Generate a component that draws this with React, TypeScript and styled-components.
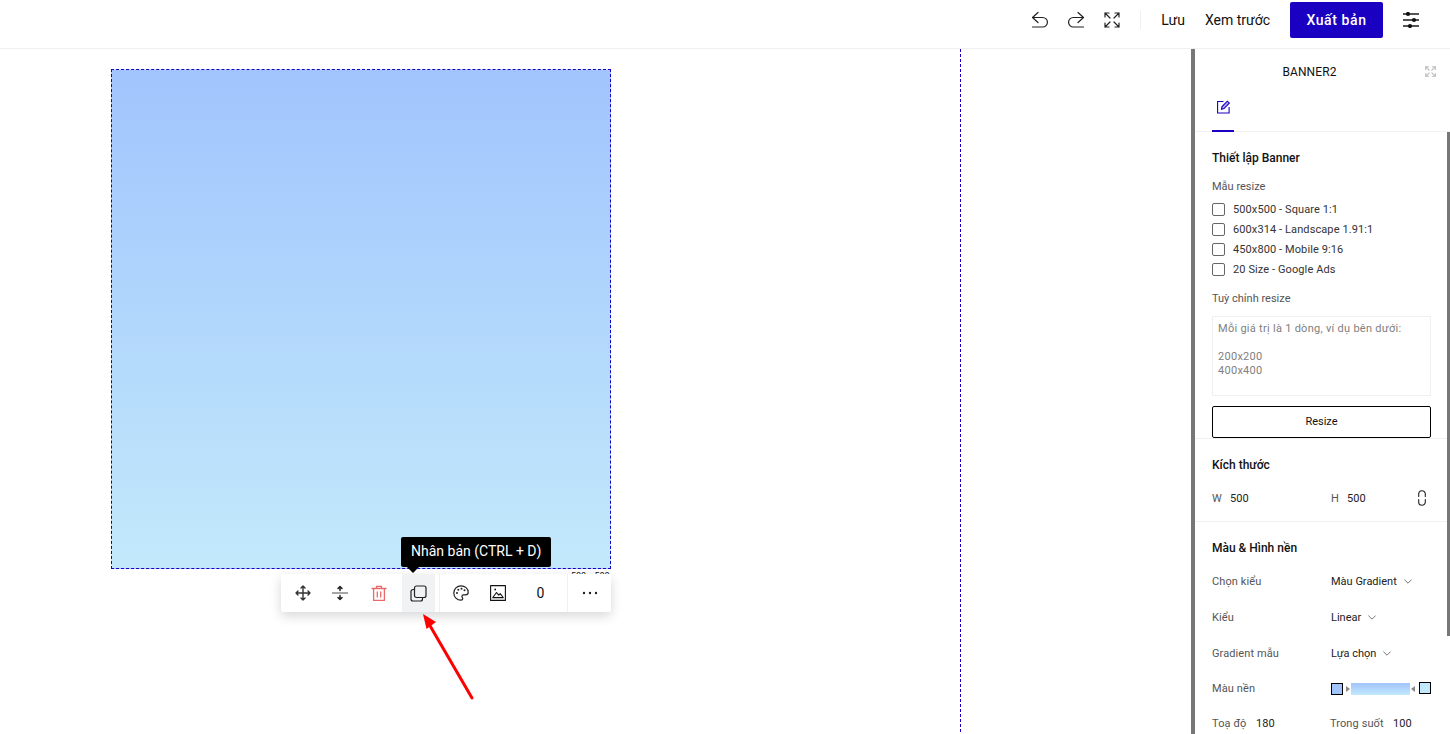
import React from "react";
import styled, { createGlobalStyle } from "styled-components";

const ACCENT = "#1a00c0";

const Global = createGlobalStyle`
  html, body { margin: 0; padding: 0; background: #fff; }
  body { font-family: Roboto, "Liberation Sans", sans-serif; color: #111; }
  * { box-sizing: border-box; }
`;

const Page = styled.div`
  width: 1450px; height: 734px; overflow: hidden; display: flex; flex-direction: column; position: relative;
`;
const Header = styled.header`
  height: 49px; flex: none; border-bottom: 1px solid #f0f0f0; display: flex; align-items: center; justify-content: flex-end; padding: 0 31px 8px 0;
`;
const IconBtn = styled.span<{ $mr?: number }>`
  display: inline-flex; margin-right: ${(p) => p.$mr ?? 0}px; line-height: 0;
`;
const VSep = styled.span`
  width: 1px; height: 18px; background: #eee; margin: 0 20px;
`;
const HeadText = styled.span<{ $mr: number }>`
  font-size: 14px; color: #111; margin-right: ${(p) => p.$mr}px;
`;
const Publish = styled.button`
  width: 93px; height: 36px; background: ${ACCENT}; color: #fff; border: 0; border-radius: 2px; margin-right: 20px;
  font: 500 14px Roboto, sans-serif; letter-spacing: 0.6px; padding: 0;
`;
const Main = styled.div`
  flex: 1; display: flex; min-height: 0;
`;
const CanvasArea = styled.div`
  width: 1191px; flex: none;
`;
const Workspace = styled.div`
  width: 961px; height: 683px; border-right: 1px dashed ${ACCENT}; padding: 20px 0 0 111px;
`;
const Artboard = styled.div`
  width: 500px; height: 500px; border: 1px dashed ${ACCENT}; background: linear-gradient(180deg, #a1c4fd 0%, #c2e9fb 100%);
`;
const SizeLabel = styled.span`
  position: absolute; left: 571px; top: 571px; font-size: 9px; line-height: 11px; color: #111; word-spacing: 6px;
`;
const Toolbar = styled.div`
  position: absolute; left: 281px; top: 574px; width: 330px; height: 38px; display: flex; background: #fff; border-radius: 2px;
  box-shadow: 0 4px 12px rgba(0,0,0,.16);
`;
const Tool = styled.div<{ $w: number; $active?: boolean }>`
  width: ${(p) => p.$w}px; flex: none; display: flex; align-items: center; justify-content: center; font-size: 14px; color: #111;
  background: ${(p) => (p.$active ? "#f1f2f4" : "transparent")};
`;
const ToolDivider = styled.div<{ $ml?: number }>`
  width: 1px; flex: none; background: #f0f0f0; margin-left: ${(p) => p.$ml ?? 0}px;
`;
const Tooltip = styled.div`
  position: absolute; left: 401px; top: 537px; width: 150px; height: 30px; background: #000; color: #fff; border-radius: 2px;
  font-size: 14px; line-height: 29px; padding-left: 10px; white-space: nowrap;
  &::after {
    content: ""; position: absolute; left: 6px; top: 30px; border: 6px solid transparent; border-top-color: #000; border-bottom: 0;
  }
`;
const ArrowMark = styled.svg`
  position: absolute; left: 410px; top: 605px;
`;
const Panel = styled.aside`
  width: 259px; flex: none; border-left: 4px solid #777; position: relative; background: #fff;
`;
const PanelTitle = styled.div`
  height: 44px; display: flex; align-items: center; justify-content: center; font-size: 12px; font-weight: 400; letter-spacing: 0.1px; padding: 1px 26px 0 0; color: #111; position: relative;
`;
const PanelExpand = styled.span`
  position: absolute; right: 14px; top: 17px; line-height: 0;
`;
const Tabs = styled.div`
  height: 39px; border-bottom: 1px solid #f0f0f0; padding-left: 17px; display: flex;
`;
const Tab = styled.div`
  width: 22px; height: 39px; border-bottom: 2px solid ${ACCENT}; display: flex; justify-content: center; padding: 7px 0 0 1px; line-height: 0;
`;
const Thumb = styled.div`
  position: absolute; right: 0; top: 83px; width: 3px; height: 504px; background: #777;
`;
const Section = styled.section<{ $pb?: number; $border?: boolean }>`
  padding: 18px 19px ${(p) => p.$pb ?? 0}px 17px;
  border-bottom: ${(p) => (p.$border ? "1px solid #f0f0f0" : "0")};
`;
const SectionTitle = styled.h3`
  margin: 0; font-size: 12px; line-height: 16px; font-weight: 500; color: #111;
`;
const FieldLabel = styled.div<{ $mt: number }>`
  margin-top: ${(p) => p.$mt}px; font-size: 11px; line-height: 16px; color: #555;
`;
const CheckList = styled.div`
  margin-top: 4px;
`;
const CheckRow = styled.label`
  height: 20px; display: flex; align-items: center; gap: 8px; font-size: 11px; font-weight: 400; color: #333; letter-spacing: 0.1px;
`;
const CheckBox = styled.span`
  width: 13px; height: 13px; border: 1px solid #666; border-radius: 2px; flex: none;
`;
const TextBox = styled.textarea`
  display: block; width: 219px; height: 80px; margin-top: 9px; border: 1px solid #f0f0f0; border-radius: 0; padding: 5px 5px; resize: none; outline: 0;
  font: 11px/14px Roboto, sans-serif; letter-spacing: 0.28px; overflow: hidden;
  &::placeholder { color: #808080; opacity: 1; }
`;
const OutlineBtn = styled.button`
  display: block; width: 219px; height: 32px; margin-top: 10px; background: #fff; border: 1px solid #000; border-radius: 2px; font: 11px Roboto, sans-serif; color: #111; padding: 0 0 2px;
`;
const SizeRow = styled.div`
  margin-top: 17px; height: 16px; display: flex; align-items: center; font-size: 11px; position: relative;
`;
const Key = styled.span<{ $w?: number }>`
  color: #555; letter-spacing: 0.1px; ${(p) => (p.$w ? `width: ${p.$w}px; flex: none;` : "")}
`;
const Val = styled.span<{ $w?: number }>`
  color: #222; letter-spacing: 0.1px; ${(p) => (p.$w ? `width: ${p.$w}px; flex: none;` : "")}
`;
const PropList = styled.div`
  margin-top: 7px;
`;
const PropRow = styled.div<{ $h?: number }>`
  height: ${(p) => p.$h ?? 36}px; display: flex; align-items: center; font-size: 11px;
`;
const SelectBox = styled.span`
  display: inline-flex; align-items: center; gap: 7px; color: #222; font-size: 11px;
`;
const Swatch = styled.span<{ $c: string; $up?: boolean }>`
  width: 12px; height: 12px; border: 1px solid #000; background: ${(p) => p.$c}; flex: none; margin-bottom: ${(p) => (p.$up ? 2 : 0)}px;
`;
const Nub = styled.span<{ $dir: "l" | "r" }>`
  width: 0; height: 0; border-top: 3px solid transparent; border-bottom: 3px solid transparent;
  ${(p) => (p.$dir === "r" ? "border-left: 4px solid #888; margin: 0 1px 0 3px;" : "border-right: 4px solid #888; margin: 0 4px 0 1px;")}
`;
const GradBar = styled.span`
  width: 59px; height: 12px; background: linear-gradient(180deg, #a1c4fd, #c2e9fb); flex: none;
`;
const GradWrap = styled.div`
  display: flex; align-items: center; width: 100px;
`;

const Svg = ({ w, h, children, c = "#222", sw = 1.2 }: { w: number; h: number; children: React.ReactNode; c?: string; sw?: number }) => (
  <svg width={w} height={h} viewBox={`0 0 ${w} ${h}`} fill="none" stroke={c} strokeWidth={sw} strokeLinecap="round" strokeLinejoin="round">
    {children}
  </svg>
);
const Undo = () => (
  <Svg w={18} h={18}><path d="M7 1.5 1.5 6.5 7 11.5M1.5 6.5h10.2a4.75 4.75 0 0 1 0 9.5H1.5" /></Svg>
);
const Redo = () => (
  <Svg w={18} h={18}><path d="M11 1.5 16.5 6.5 11 11.5M16.5 6.5H6.3a4.75 4.75 0 0 0 0 9.5h10.2" /></Svg>
);
const Corners = ({ s = 16, c = "#222", sw = 1.2 }: { s?: number; c?: string; sw?: number }) => {
  const k = s / 16;
  const p = (n: number) => n * k;
  return (
    <Svg w={s} h={s} c={c} sw={sw}>
      <path d={`M${p(1)} ${p(5)}V${p(1)}H${p(5)}M${p(1)} ${p(1)}L${p(6)} ${p(6)}`} />
      <path d={`M${p(15)} ${p(5)}V${p(1)}H${p(11)}M${p(15)} ${p(1)}L${p(10)} ${p(6)}`} />
      <path d={`M${p(1)} ${p(11)}V${p(15)}H${p(5)}M${p(1)} ${p(15)}L${p(6)} ${p(10)}`} />
      <path d={`M${p(15)} ${p(11)}V${p(15)}H${p(11)}M${p(15)} ${p(15)}L${p(10)} ${p(10)}`} />
    </Svg>
  );
};
const Sliders = () => (
  <svg width="16" height="16" viewBox="0 0 16 16" fill="#111" stroke="#1c1c1c" strokeWidth="1.7">
    <path d="M0 2h16M0 8h16M0 14h16" />
    <circle cx="5" cy="2" r="2.1" stroke="none" />
    <circle cx="11" cy="8" r="2.1" stroke="none" />
    <circle cx="7" cy="14" r="2.1" stroke="none" />
  </svg>
);
const EditIcon = () => (
  <svg width="13" height="14" viewBox="0 0 13 14" fill="none" stroke={ACCENT} strokeWidth="1.1">
    <path d="M6.500 1.500H.6v11.500h11.500V7" />
    <path d="M4.500 9.200 5 6.600 10.300 1.200 12.300 3.200 7 8.600Z" fill={ACCENT} fillOpacity=".35" />
  </svg>
);
const MoveIcon = () => (
  <Svg w={16} h={16} c="#333" sw={1.4}>
    <path d="M8 1v14M1 8h14M6 3 8 1l2 2M6 13l2 2 2-2M3 6 1 8l2 2M13 6l2 2-2 2" />
  </Svg>
);
const SplitIcon = () => (
  <svg width="16" height="16" viewBox="0 0 16 16" fill="none" strokeLinecap="round" strokeLinejoin="round">
    <path d="M0.5 8h15" stroke="#888" strokeWidth="1.6" />
    <path d="M8 1.500V5.500M6 3.500 8 1.500l2 2M8 10.500v4M6 12.500 8 14.500l2-2" stroke="#222" strokeWidth="1.5" />
  </svg>
);
const TrashIcon = () => (
  <Svg w={16} h={16} c="#e86a6a" sw={1.3}>
    <path d="M1 3.500h14M5.500 3.500V1.300h5v2.200M2.600 3.500v12h10.800v-12M6.300 7v5M9.700 7v5" />
  </Svg>
);
const CopyIcon = () => (
  <Svg w={17} h={17} c="#222" sw={1.2}>
    <rect x="4.500" y="1" width="11.500" height="11.500" rx="2" />
    <path d="M4.500 4.500H3a2 2 0 0 0-2 2V14a2 2 0 0 0 2 2h7.500a2 2 0 0 0 2-2v-1.500" />
  </Svg>
);
const PaletteIcon = () => (
  <svg width="16" height="16" viewBox="0 0 16 16" fill="none" stroke="#222" strokeWidth="1.2" strokeLinejoin="round">
    <path d="M8 .8a7.2 7.2 0 0 0 0 14.4c1.3 0 1.8-.8 1.8-1.6 0-.5-.3-.9-.5-1.2-.3-.4-.4-.7-.4-1 0-.9.7-1.5 1.6-1.5h2c1.5 0 2.7-1 2.7-2.6C15.2 3.600 12 .8 8 .8Z" />
    <g fill="#222" stroke="none">
      <circle cx="4" cy="8" r="1" /><circle cx="5.300" cy="4.800" r="1" /><circle cx="8.500" cy="3.700" r="1" /><circle cx="11.500" cy="5.200" r="1" />
    </g>
  </svg>
);
const ImageIcon = () => (
  <Svg w={16} h={16} c="#111" sw={1.1}>
    <rect x=".6" y=".6" width="14.800" height="14.800" />
    <path d="M2.800 12.500 6.500 7.500l2.200 2.600 1.500-1.500 3 3.900ZM2.800 12.800h10.400" />
    <circle cx="5.200" cy="4.500" r=".9" fill="#111" stroke="none" />
  </Svg>
);
const Dots = () => (
  <svg width="16" height="4" viewBox="0 0 16 4" fill="#222">
    <circle cx="2" cy="2" r="1.200" /><circle cx="8" cy="2" r="1.200" /><circle cx="14" cy="2" r="1.200" />
  </svg>
);
const Chevron = () => (
  <svg width="8" height="5" viewBox="0 0 8 5" fill="none" stroke="#666" strokeWidth=".9"><path d="M.4.6 4 4.200 7.600.6" /></svg>
);
const LinkIcon = () => (
  <svg width="8" height="16" viewBox="0 0 8 16" fill="none" stroke="#222" strokeWidth="1.1" strokeLinecap="round">
    <path d="M.7 6.500V4a3.300 3.300 0 0 1 6.600 0v2.500M.7 9.500V12a3.300 3.300 0 0 0 6.600 0V9.500" />
  </svg>
);

const checks = ["500x500 - Square 1:1", "600x314 - Landscape 1.91:1", "450x800 - Mobile 9:16", "20 Size - Google Ads"];

export default function App() {
  return (
    <Page>
      <Global />
      <Header>
        <IconBtn $mr={18}><Undo /></IconBtn>
        <IconBtn $mr={19}><Redo /></IconBtn>
        <IconBtn><Corners /></IconBtn>
        <VSep />
        <HeadText $mr={20}>Lưu</HeadText>
        <HeadText $mr={20}>Xem trước</HeadText>
        <Publish>Xuất bản</Publish>
        <IconBtn><Sliders /></IconBtn>
      </Header>
      <Main>
        <CanvasArea>
          <Workspace>
            <Artboard />
          </Workspace>
        </CanvasArea>
        <Panel>
          <PanelTitle>
            BANNER2
            <PanelExpand><Corners s={11} c="#bbb" sw={1.1} /></PanelExpand>
          </PanelTitle>
          <Tabs><Tab><EditIcon /></Tab></Tabs>
          <Thumb />
          <Section $border>
            <SectionTitle>Thiết lập Banner</SectionTitle>
            <FieldLabel $mt={13}>Mẫu resize</FieldLabel>
            <CheckList>
              {checks.map((c) => (
                <CheckRow key={c}><CheckBox />{c}</CheckRow>
              ))}
            </CheckList>
            <FieldLabel $mt={12}>Tuỳ chỉnh resize</FieldLabel>
            <TextBox placeholder={"Mỗi giá trị là 1 dòng, ví dụ bên dưới:\n\n200x200\n400x400"} />
            <OutlineBtn>Resize</OutlineBtn>
          </Section>
          <Section $border $pb={15}>
            <SectionTitle>Kích thước</SectionTitle>
            <SizeRow>
              <Key $w={18}>W</Key>
              <Val $w={101}>500</Val>
              <Key $w={16}>H</Key>
              <Val $w={71}>500</Val>
              <LinkIcon />
            </SizeRow>
          </Section>
          <Section>
            <SectionTitle>Màu &amp; Hình nền</SectionTitle>
            <PropList>
              <PropRow><Key $w={119}>Chọn kiểu</Key><SelectBox>Màu Gradient <Chevron /></SelectBox></PropRow>
              <PropRow><Key $w={119}>Kiểu</Key><SelectBox>Linear <Chevron /></SelectBox></PropRow>
              <PropRow><Key $w={119}>Gradient mẫu</Key><SelectBox>Lựa chọn <Chevron /></SelectBox></PropRow>
              <PropRow $h={35}>
                <Key $w={119}>Màu nền</Key>
                <GradWrap><Swatch $c="#a1c4fd" /><Nub $dir="r" /><GradBar /><Nub $dir="l" /><Swatch $c="#c2e9fb" $up /></GradWrap>
              </PropRow>
              <PropRow $h={34}>
                <Key $w={44}>Toạ độ</Key><Val $w={74}>180</Val>
                <Key $w={63}>Trong suốt</Key><Val>100</Val>
              </PropRow>
            </PropList>
          </Section>
        </Panel>
      </Main>
      <SizeLabel>500 500</SizeLabel>
      <Toolbar>
        <Tool $w={44}><MoveIcon /></Tool>
        <Tool $w={30}><SplitIcon /></Tool>
        <Tool $w={47}><TrashIcon /></Tool>
        <Tool $w={33} $active><CopyIcon /></Tool>
        <ToolDivider $ml={4} />
        <Tool $w={42}><PaletteIcon /></Tool>
        <Tool $w={32}><ImageIcon /></Tool>
        <Tool $w={53}>0</Tool>
        <ToolDivider />
        <Tool $w={43}><Dots /></Tool>
      </Toolbar>
      <Tooltip>Nhân bản (CTRL + D)</Tooltip>
      <ArrowMark width="70" height="100" viewBox="0 0 70 100">
        <path d="M62 93 19 19" stroke="#f00" strokeWidth="3" strokeLinecap="round" />
        <path d="M13 9 26 17 16.500 24Z" fill="#f00" />
      </ArrowMark>
    </Page>
  );
}
